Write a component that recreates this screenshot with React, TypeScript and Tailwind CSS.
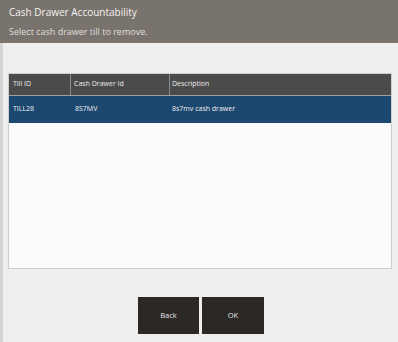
import React from 'react';

const rows = [{ till: 'TILL28', drawer: '8S7MV', desc: '8s7mv cash drawer' }];

export default function App() {
  return (
    <div className="flex h-[342px] w-[398px] flex-col bg-[#efefef] font-['Open_Sans',sans-serif]">
      {/* Title band */}
      <div className="flex h-[43px] flex-col bg-[#79736e] pl-[9px] pt-[5px] text-[#f4f2ef]">
        <div className="text-[10px] leading-[14px]">Cash Drawer Accountability</div>
        <div className="mt-[7px] text-[9px] leading-[12px] text-[#e2dedb]">Select cash drawer till to remove.</div>
      </div>

      <div className="flex flex-1 border-l-[3px] border-[#d4d4d4]">
        <div className="flex flex-1 flex-col">
          {/* Table */}
          <div className="ml-[5px] mr-[6px] mt-[30px] flex h-[196px] flex-col border border-[#cfcfcf] bg-[#fbfbfb]">
            <div className="flex h-[21px] bg-[#4b4b4b] text-[7px] text-[#ececec]">
              <div className="flex w-[62px] items-center border-r border-[#8a8a8a] pl-[4px]">Till ID</div>
              <div className="flex w-[99px] items-center border-r border-[#8a8a8a] pl-[3px]">Cash Drawer Id</div>
              <div className="flex flex-1 items-center pl-[2px]">Description</div>
            </div>
            {rows.map((r) => (
              <div key={r.till} className="flex h-[28px] border-t border-[#a0a0a0] bg-[#1c476f] text-[7px] text-[#f0f0f0]">
                <div className="flex w-[62px] items-center pl-[4px]">{r.till}</div>
                <div className="flex w-[99px] items-center pl-[4px]">{r.drawer}</div>
                <div className="flex flex-1 items-center pl-[2px]">{r.desc}</div>
              </div>
            ))}
          </div>

          {/* Buttons */}
          <div className="mt-[28px] flex justify-center gap-[3px] pl-[1px]">
            <button className="h-[37px] w-[61px] bg-[#2c2826] text-[7.5px] text-[#e8e6e3]">Back</button>
            <button className="h-[37px] w-[62px] bg-[#2c2826] text-[7.5px] text-[#e8e6e3]">OK</button>
          </div>
        </div>
      </div>
    </div>
  );
}
